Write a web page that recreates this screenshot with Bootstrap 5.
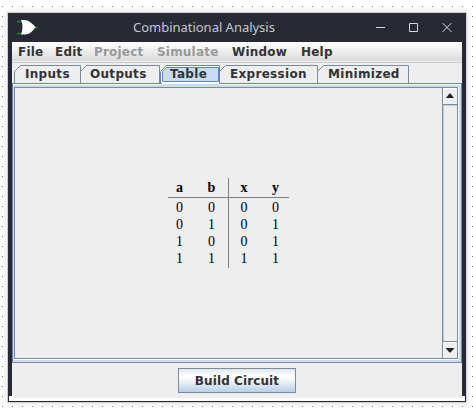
<!DOCTYPE html>
<html lang="en">
<head>
<meta charset="utf-8">
<title>Combinational Analysis</title>
<link href="https://cdn.jsdelivr.net/npm/bootstrap@5.3.0/dist/css/bootstrap.min.css" rel="stylesheet">
<style>
body{width:473px;height:409px;overflow:hidden;padding:13px 0 0 8px;background:conic-gradient(from 90deg at 9px 9px,#777 90deg,#fff 0) 3px 7px/10px 10px;font-family:"DejaVu Sans",sans-serif;font-size:12px;font-weight:700;line-height:14px;letter-spacing:.2px;color:#333}
.win{width:458px;height:389px;background:#272a34;box-shadow:0 0 0 1px #d2d2d2,0 0 7px 1px #0002}
.titlebar{height:29px;color:#c3c7d1;font:400 13px/29px "Noto Sans",sans-serif}
.titlebar .logo{width:24px;height:18px;margin:6px 0 0 8px}
.caption{margin-left:93px;letter-spacing:-.02px;white-space:nowrap}
.winctl{width:90px;height:29px;margin-right:1px}
.client{height:354px;margin:0 4px;background:#eee}
.menubar{height:21px;background:linear-gradient(#fff,#dadada 19px,#eee 19px,#eee 20px,#ccc 20px);padding:3px 0 0 6px}
.menubar span{white-space:nowrap}
.off{color:#999}
.tabs{height:20px;padding:2px 0 0 2px}
.jtab{height:18px;position:relative;padding-left:11px}
.jtab svg{position:absolute;left:0;top:0;height:19px;overflow:visible;fill:#eee;stroke:#7a8a99}
.jtab.on{z-index:1}
.jtab.on svg{fill:#fff;stroke:#6382bf}
.jtab span{position:relative;display:block;white-space:nowrap;line-height:19px;letter-spacing:.3px}
.pane{height:280px;border:1px solid #7a8a99;border-top-color:#6382bf;border-left-color:#6382bf;background:#c8ddf2;padding:3px 3px 2px 1px;box-shadow:inset 0 1px #fff}
.inner{height:272px;background:#eee;border:1px solid #7a8a99;border-right:0;box-shadow:0 1px #fff,1px 0 #fff}
.truth{font:14px/17px "Liberation Serif",serif;letter-spacing:0;color:#000;margin:90px 0 0 153px;width:121px;height:90px;table-layout:fixed;border-collapse:separate;border-spacing:0}
.truth tr>*{padding:0;text-align:center;height:17px}
.truth thead th{height:20px;border-bottom:1px solid #808080}
.truth tbody tr:first-child td{height:18px;padding-top:1px}
.truth tbody tr:last-child td{height:18px;padding-bottom:1px}
.truth tr>:first-child{padding-right:4px}
.truth tr>:last-child{padding-left:3px}
.truth .edge{border-right:1px solid #808080}
.scroll{width:16px;border:solid #7a8a99;border-width:0 1px}
.arrow{height:16px;width:14px;background:#eee;border:solid #fff;border-width:1px 0 0 1px}
.track{background:#eee;border:solid #7a8a99;border-width:1px 0;box-shadow:inset 1px 1px #b8cfe5}
.actions{height:33px;padding-top:5px}
.build{width:118px;height:25px;border:1px solid #7a8a99;border-radius:0;background:linear-gradient(#dde8f3,#fff 30%,#fff 38%,#b8cfe5);padding:0;font-size:12px;font-weight:700;line-height:22px;letter-spacing:.1px;color:#333}
.foot{height:5px;margin:0 1px;background:#fff;padding:0 3px}
.foot div{height:2px;background:#eee}
</style>
</head>
<body>
<div class="win">
 <div class="titlebar d-flex">
  <svg class="logo" viewBox="0 0 24 18"><path d="M1 2.500h4M1 14.500h4M19 8.500h3" stroke="#168a25" stroke-width="1.3"/><path d="M5 1H9Q15 2 19.500 8.500Q15 15 9 15.500H5Q8 8 5 1Z" fill="#fff"/></svg>
  <span class="caption">Combinational Analysis</span>
  <svg class="winctl ms-auto" viewBox="0 0 90 29" fill="none" stroke="#d3dae3"><path d="M1 14.500h9M34.500 10.500h8v8h-8zM67.500 10l9 9M76.500 10l-9 9"/></svg>
 </div>
 <div class="client">
  <div class="menubar d-flex">
   <span style="width:37px">File</span><span style="width:39px">Edit</span><span class="off" style="width:63px">Project</span><span class="off" style="width:75px">Simulate</span><span style="width:69px">Window</span><span>Help</span>
  </div>
  <div class="tabs d-flex">
   <div class="jtab" style="width:67px"><svg width="68"><path d="M.5 18V6.500L6.500.5H66.500V18"/></svg><span>Inputs</span></div>
   <div class="jtab" style="width:80px;padding-left:9px"><svg width="80"><path d="M-.5 18V6.500L5.500.5H78.500V18"/></svg><span>Outputs</span></div>
   <div class="jtab on" style="width:58px;padding-left:9px"><svg width="60"><path d="M-.5 18V6.500L5.500.5H58.500V18"/><path d="M1 18h57v3H1z" fill="#c8ddf2" stroke="none"/><path d="M1 18h57v1H1z" fill="#fff" stroke="none"/><path d="M1.500 16.500V6.500L5.500 2.500H57.500V16.500Z" fill="#c8ddf2"/></svg><span>Table</span></div>
   <div class="jtab" style="width:99px"><svg width="99"><path d="M.5 18V6.500L6.500.5H98.500V18"/></svg><span>Expression</span></div>
   <div class="jtab" style="width:92px;padding-left:10px"><svg width="92"><path d="M-.5 18V6.500L5.500.5H90.500V18"/></svg><span>Minimized</span></div>
  </div>
  <div class="pane"><div class="inner d-flex">
   <div class="flex-grow-1">
   <table class="truth">
    <colgroup><col style="width:27px"><col style="width:34px"><col style="width:30px"><col style="width:30px"></colgroup>
    <thead><tr><th>a</th><th class="edge">b</th><th>x</th><th>y</th></tr></thead>
    <tbody><tr><td>0</td><td class="edge">0</td><td>0</td><td>0</td></tr><tr><td>0</td><td class="edge">1</td><td>0</td><td>1</td></tr><tr><td>1</td><td class="edge">0</td><td>0</td><td>1</td></tr><tr><td>1</td><td class="edge">1</td><td>1</td><td>1</td></tr></tbody>
   </table></div>
   <div class="scroll d-flex flex-column">
    <div class="arrow"><svg class="d-block" width="13" height="15"><path d="M2 9h8L6.500 4.500h-1z" fill="#222"/></svg></div>
    <div class="track flex-grow-1"></div>
    <div class="arrow"><svg class="d-block" width="13" height="15"><path d="M1.500 5h9L6.500 9.500h-1z" fill="#222"/></svg></div>
   </div>
  </div></div>
  <div class="actions text-center"><button class="btn build">Build Circuit</button></div>
 </div>
 <div class="foot"><div></div></div>
</div>
<script src="https://cdn.jsdelivr.net/npm/bootstrap@5.3.0/dist/js/bootstrap.bundle.min.js"></script>
</body>
</html>
